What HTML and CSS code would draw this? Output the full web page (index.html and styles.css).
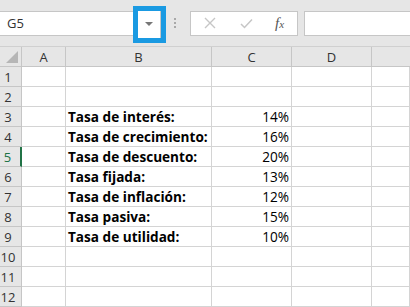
FILE: index.html
```html
<!DOCTYPE html>
<html lang="es">
<head>
<meta charset="utf-8">
<link rel="stylesheet" href="styles.css">
</head>
<body>
<div class="toolbar">
  <div class="namebox">
    <span class="name">G5</span>
    <div class="dropwrap"><div class="drop"><span class="arrow"></span></div></div>
  </div>
  <div class="dots"><span></span><span></span><span></span></div>
  <div class="fbtns">
    <svg class="ic" width="12" height="12" viewBox="0 0 12 12"><path d="M1 1L11 11M11 1L1 11" stroke="#c6c6c6" stroke-width="1.4" fill="none"/></svg>
    <svg class="ic" width="13" height="11" viewBox="0 0 13 11"><path d="M1 6L4.5 9.5L12 1.5" stroke="#c6c6c6" stroke-width="1.5" fill="none"/></svg>
    <span class="fx"><i>f</i><i class="x">x</i></span>
  </div>
  <div class="formula"></div>
</div>
<div class="sheet">
  <div class="corner"><span class="tri"></span></div>
  <div class="ch">A</div><div class="ch">B</div><div class="ch">C</div><div class="ch">D</div><div class="ch last"></div>

  <div class="rh">1</div><div class="c"></div><div class="c"></div><div class="c"></div><div class="c"></div><div class="c"></div>
  <div class="rh">2</div><div class="c"></div><div class="c"></div><div class="c"></div><div class="c"></div><div class="c"></div>
  <div class="rh">3</div><div class="c"></div><div class="c b">Tasa de interés:</div><div class="c n">14%</div><div class="c"></div><div class="c"></div>
  <div class="rh">4</div><div class="c"></div><div class="c b">Tasa de crecimiento:</div><div class="c n">16%</div><div class="c"></div><div class="c"></div>
  <div class="rh sel">5</div><div class="c"></div><div class="c b">Tasa de descuento:</div><div class="c n">20%</div><div class="c"></div><div class="c"></div>
  <div class="rh">6</div><div class="c"></div><div class="c b">Tasa fijada:</div><div class="c n">13%</div><div class="c"></div><div class="c"></div>
  <div class="rh">7</div><div class="c"></div><div class="c b">Tasa de inflación:</div><div class="c n">12%</div><div class="c"></div><div class="c"></div>
  <div class="rh">8</div><div class="c"></div><div class="c b">Tasa pasiva:</div><div class="c n">15%</div><div class="c"></div><div class="c"></div>
  <div class="rh">9</div><div class="c"></div><div class="c b">Tasa de utilidad:</div><div class="c n">10%</div><div class="c"></div><div class="c"></div>
  <div class="rh">10</div><div class="c"></div><div class="c"></div><div class="c"></div><div class="c"></div><div class="c"></div>
  <div class="rh">11</div><div class="c"></div><div class="c"></div><div class="c"></div><div class="c"></div><div class="c"></div>
  <div class="rh">12</div><div class="c"></div><div class="c"></div><div class="c"></div><div class="c"></div><div class="c"></div>
</div>
</body>
</html>
```
FILE: styles.css
```css
html, body {
  margin: 0;
  padding: 0;
  background: #ffffff;
  font-family: "Open Sans", "Noto Sans", sans-serif;
  overflow: hidden;
}
.toolbar {
  height: 47px;
  background: #e6e6e6;
  display: flex;
  align-items: center;
  box-sizing: border-box;
  border-bottom: 1px solid #d0d0d0;
}
.namebox {
  width: 160px;
  height: 25px;
  background: #fff;
  border: 1px solid #c6c6c6;
  border-left: none;
  box-sizing: border-box;
  display: flex;
  align-items: center;
  position: relative;
}
.name {
  font-size: 13px;
  color: #333;
  margin-left: 7px;
  flex: 1;
}
.dropwrap {
  position: absolute;
  left: 133px;
  top: -6px;
  width: 33px;
  height: 37px;
  border: 5px solid #1a9ae2;
  box-sizing: border-box;
  background: #fff;
}
.drop {
  width: 100%;
  height: 100%;
  display: flex;
  align-items: center;
  justify-content: center;
  border-right: 1px solid #c6c6c6;
  box-sizing: border-box;
}
.arrow {
  width: 0;
  height: 0;
  border-left: 4px solid transparent;
  border-right: 4px solid transparent;
  border-top: 4px solid #777;
}
.dots {
  width: 30px;
  display: flex;
  flex-direction: column;
  align-items: center;
  gap: 2px;
}
.dots span {
  width: 2px;
  height: 2px;
  background: #a8a8a8;
}
.fbtns {
  width: 108px;
  height: 25px;
  background: #fff;
  border: 1px solid #c6c6c6;
  box-sizing: border-box;
  display: flex;
  align-items: center;
  padding-left: 13px;
}
.fbtns .ic:first-child { margin-right: 24px; }
.fbtns .ic:nth-child(2) { margin-right: 22px; }
.fx {
  font-family: "Liberation Serif", serif;
  font-size: 15px;
  color: #555;
}
.fx .x { font-size: 11px; }
.formula {
  flex: 1;
  height: 25px;
  background: #fff;
  border: 1px solid #c6c6c6;
  border-right: none;
  box-sizing: border-box;
  margin-left: 6px;
}
.sheet {
  display: grid;
  grid-template-columns: 22px 44px 146px 80px 80px 38px;
  grid-template-rows: 20px repeat(12, 20px);
}
.corner {
  background: #e6e6e6;
  border-right: 1px solid #c6c6c6;
  border-bottom: 1px solid #c6c6c6;
  position: relative;
}
.tri {
  position: absolute;
  right: 3px;
  bottom: 3px;
  width: 0;
  height: 0;
  border-left: 12px solid transparent;
  border-bottom: 12px solid #b6b6b6;
}
.ch {
  background: #e6e6e6;
  border-right: 1px solid #c6c6c6;
  border-bottom: 1px solid #c6c6c6;
  font-size: 13px;
  color: #333;
  display: flex;
  align-items: center;
  justify-content: center;
}
.ch.last { border-right: none; }
.rh {
  background: #e6e6e6;
  border-right: 1px solid #c6c6c6;
  border-bottom: 1px solid #c6c6c6;
  font-size: 13px;
  color: #333;
  display: flex;
  align-items: center;
  justify-content: center;
  box-sizing: border-box;
  padding-right: 5px;
}
.rh.sel {
  color: #217346;
  border-right: 2px solid #217346;
}
.c {
  border-right: 1px solid #d4d4d4;
  border-bottom: 1px solid #d4d4d4;
  font-size: 13.6px;
  color: #000;
  display: flex;
  align-items: flex-end;
  padding: 0 2px 0 2px;
  white-space: nowrap;
  line-height: 19px;
}
.c.b { font-weight: bold; }
.c.n { justify-content: flex-end; }
```
